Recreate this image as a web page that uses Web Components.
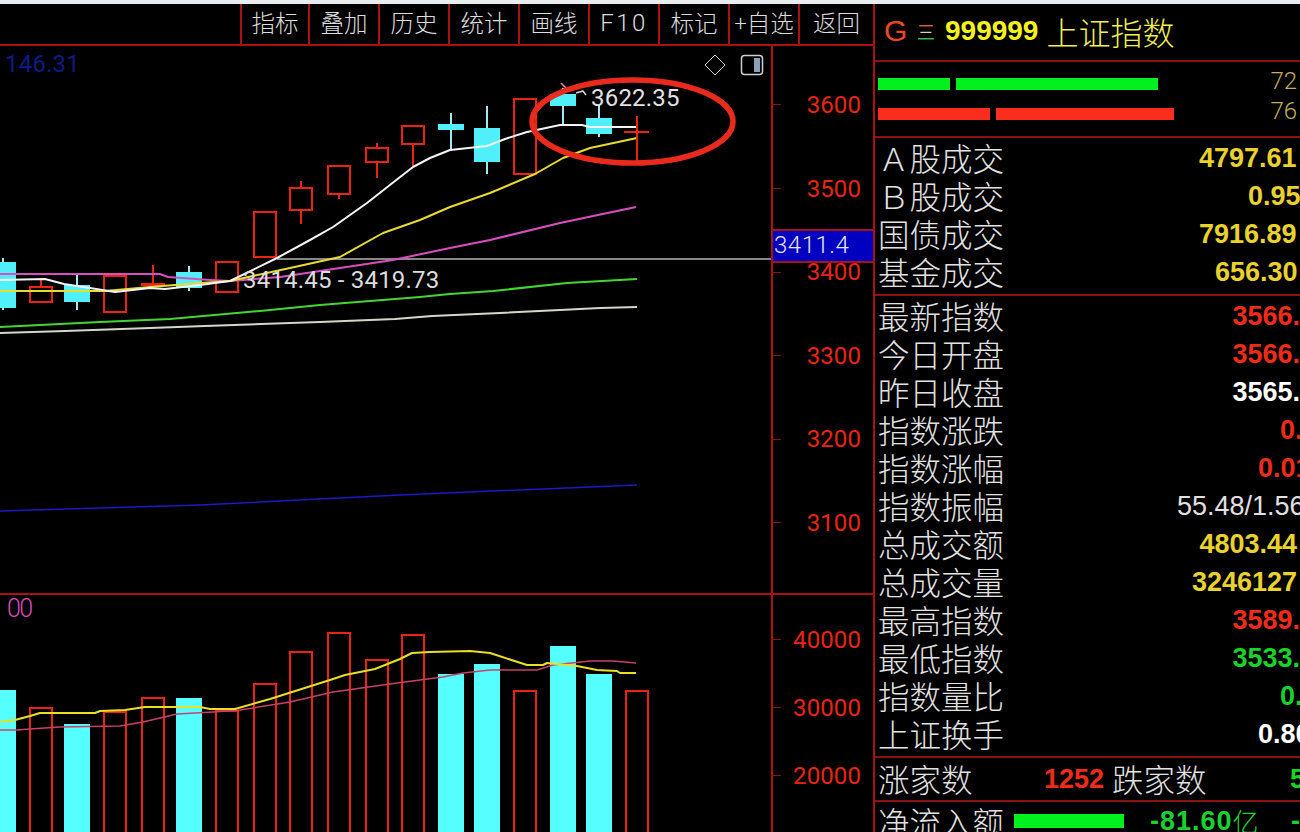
<!DOCTYPE html>
<html lang="zh-CN">
<head>
<meta charset="utf-8">
<title>上证指数</title>
<style>
html,body{margin:0;padding:0;background:#000}
</style>
</head>
<body>
<tdx-app>
  <tool-bar slot="bar">
    <tool-btn narrow>指标</tool-btn><tool-btn>叠加</tool-btn><tool-btn>历史</tool-btn><tool-btn>统计</tool-btn><tool-btn>画线</tool-btn><tool-btn latin>F10</tool-btn><tool-btn>标记</tool-btn><tool-btn>+自选</tool-btn><tool-btn wide>返回</tool-btn>
  </tool-bar>
  <chart-pane slot="price" rule style="--pane-h:549px">
    <kline-plot></kline-plot>
    <price-axis slot="axis" ticks="3600,3500,3400,3300,3200,3100" step="83.6" top="17.2">
      <span class="cur">3411.4</span>
    </price-axis>
  </chart-pane>
  <chart-pane slot="volume" style="--pane-h:237px">
    <volume-plot></volume-plot>
    <price-axis slot="axis" ticks="40000,30000,20000" step="68" top="10.5"></price-axis>
  </chart-pane>
  <quote-panel slot="panel">
    <quote-head slot="head"></quote-head>
    <quote-levels slot="levels"></quote-levels>
    <quote-group>
      <quote-row tone="yellow" over="3.5"><span slot="value">4797.61</span>Ａ股成交</quote-row>
      <quote-row tone="yellow" over="-0.5"><span slot="value">0.95</span>Ｂ股成交</quote-row>
      <quote-row tone="yellow" over="3.5"><span slot="value">7916.89</span>国债成交</quote-row>
      <quote-row tone="yellow" over="2.5"><span slot="value">656.30</span>基金成交</quote-row>
    </quote-group>
    <quote-group>
      <quote-row tone="red"><span slot="value">3566.</span>最新指数</quote-row>
      <quote-row tone="red"><span slot="value">3566.</span>今日开盘</quote-row>
      <quote-row tone="white"><span slot="value">3565.</span>昨日收盘</quote-row>
      <quote-row tone="red" over="-2.5"><span slot="value">0.</span>指数涨跌</quote-row>
      <quote-row tone="red" over="-10.5"><span slot="value">0.01</span>指数涨幅</quote-row>
      <quote-row tone="plain" over="-4.5"><span slot="value">55.48/1.56</span>指数振幅</quote-row>
      <quote-row tone="yellow" over="3"><span slot="value">4803.44</span>总成交额</quote-row>
      <quote-row tone="yellow" over="3"><span slot="value">3246127</span>总成交量</quote-row>
      <quote-row tone="red"><span slot="value">3589.</span>最高指数</quote-row>
      <quote-row tone="green"><span slot="value">3533.</span>最低指数</quote-row>
      <quote-row tone="green" over="-2.5"><span slot="value">0.</span>指数量比</quote-row>
      <quote-row tone="white" over="-10.5"><span slot="value">0.80</span>上证换手</quote-row>
    </quote-group>
    <quote-breadth></quote-breadth>
    <quote-flow></quote-flow>
  </quote-panel>
</tdx-app>

<script>
const CJK = '"Noto Sans CJK SC","Noto Sans",sans-serif';
const NUM = '"Liberation Sans",Arial,sans-serif';
const THIN = 'Roboto,"Liberation Sans",sans-serif';
const RED = '#ea2412';
const LINE = '#a81210';
const CYAN = '#55ffff';

function define(name, html, init) {
  customElements.define(name, class extends HTMLElement {
    constructor() {
      super();
      this.attachShadow({ mode: 'open' }).innerHTML = typeof html === 'function' ? '' : html;
    }
    connectedCallback() {
      if (typeof html === 'function') this.shadowRoot.innerHTML = html(this);
      if (init) init(this, this.shadowRoot);
    }
  });
}

define('tdx-app', `<style>
:host{display:flex;width:1300px;height:832px;box-sizing:border-box;overflow:hidden;background:#000;border-top:4px solid #e9ecef;color:#ddd;font-family:${CJK}}
.left{flex:none;width:875px;box-sizing:border-box;border-right:2px solid ${LINE};display:flex;flex-direction:column;min-height:0}
::slotted([slot=panel]){flex:none;width:425px}
</style>
<div class="left"><slot name="bar"></slot><slot name="price"></slot><slot name="volume"></slot></div>
<slot name="panel"></slot>`);

define('tool-bar', `<style>
:host{display:flex;justify-content:flex-end;flex:none;height:42px;box-sizing:border-box;border-bottom:2px solid ${LINE}}
</style><slot></slot>`);

define('tool-btn', `<style>
:host{display:flex;align-items:center;justify-content:center;flex:none;width:70px;box-sizing:border-box;border-left:2px solid ${LINE};font:300 23.5px/1 ${CJK};color:#dcdcdc;white-space:nowrap;padding-bottom:2px}
:host([wide]){width:75px}
:host([narrow]){width:68px}
:host([latin]){font:300 24px/1 ${THIN};letter-spacing:2.5px}
</style><slot></slot>`);

define('chart-pane', `<style>
:host{display:flex;flex:none;height:var(--pane-h);box-sizing:border-box}
:host([rule]){border-bottom:2px solid ${LINE}}
.plot{flex:none;width:771px;height:100%;position:relative;overflow:hidden}
</style><div class="plot"><slot></slot></div><slot name="axis"></slot>`);

define('price-axis', host => {
  const ticks = host.getAttribute('ticks').split(',');
  const step = host.getAttribute('step');
  const top = host.getAttribute('top');
  return `<style>
:host{display:block;position:relative;flex:none;width:102px;height:100%;box-sizing:border-box;border-left:2px solid ${LINE};padding-top:${top}px;font:300 24px/1 ${THIN};color:${RED}}
.t{display:flex;align-items:center;height:${step}px;padding-right:12px}
.t i{width:8px;height:1px;background:#8a1a10}
.t b{font-weight:400;margin-left:auto;letter-spacing:.1px}
::slotted(.cur){position:absolute;left:0;right:0;top:184px;height:30px;line-height:28px;background:#0000c0;color:#e6e6ff;border-top:2px solid ${LINE};border-bottom:2px solid ${LINE};letter-spacing:.5px;padding-left:1px;box-sizing:content-box;margin-top:-1px}
</style>${ticks.map(t => `<div class="t"><i></i><b>${t}</b></div>`).join('')}<slot></slot>`;
});

function pts(a){return a.map(p=>p.join(',')).join(' ')}
function poly(a,c,w=2){return `<polyline points="${pts(a)}" fill="none" stroke="${c}" stroke-width="${w}" stroke-linejoin="round"/>`}
function hollow(x1,y1,x2,y2){return `<rect x="${x1+1}" y="${y1+1}" width="${x2-x1-2}" height="${y2-y1-2}" fill="#000" stroke="${RED}" stroke-width="2"/>`}
function wick(x,y1,y2,c){return `<line x1="${x}" y1="${y1}" x2="${x}" y2="${y2}" stroke="${c}" stroke-width="2"/>`}

const CANDLES = [
 ['c',0,16,262,308,258,310,3],
 ['r',29,53,286,303,279,303,41],
 ['c',64,90,285,302,275,310,77],
 ['r',103,127,275,313,275,313,115],
 ['r',141,165,283,286,265,286,153],
 ['c',176,202,272,288,266,291,189],
 ['r',215,239,261,293,261,293,227],
 ['r',253,277,211,258,211,258,265],
 ['r',289,313,187,211,181,224,301],
 ['r',327,351,165,195,165,199,339],
 ['r',365,389,147,163,143,178,377],
 ['r',401,425,125,145,125,166,413],
 ['c',438,464,124,130,113,151,451],
 ['c',474,500,128,162,106,174,487],
 ['r',513,537,98,175,98,175,525],
 ['c',550,576,94,106,88,125,563],
 ['c',586,612,118,134,105,137,599]
];

define('kline-plot', () => {
  const sticks = CANDLES.map(([t,x1,x2,y1,y2,w1,w2,cx]) =>
    t==='c'
      ? wick(cx,w1,w2,'#9fe9f5') + `<rect x="${x1}" y="${y1}" width="${x2-x1}" height="${y2-y1}" fill="#4ff0fa"/>`
      : wick(cx,w1,w2,RED) + hollow(x1,y1,x2,y2)
  ).join('');
  const white=[[0,280],[45,279],[64,284],[90,288],[115,292],[150,288],[165,289],[200,285],[230,281],[277,258],[310,240],[333,227],[350,215],[367,203],[395,181],[413,167],[430,158],[450,150],[487,146],[505,139],[527,132],[560,125],[582,125],[590,127],[637,127]];
  const yellow=[[0,291],[105,291],[150,287],[200,283],[230,281],[290,268],[340,257],[383,233],[420,220],[450,207],[490,193],[535,174],[563,158],[590,148],[637,138]];
  const magenta=[[0,274],[160,274],[168,277],[210,280],[230,281],[280,277],[340,268],[393,260],[450,248],[490,240],[560,223],[636,207]];
  const green=[[0,327],[60,324],[100,322],[170,319],[260,311],[320,305],[420,297],[450,294],[493,291],[567,283],[637,279]];
  const pale=[[0,333],[65,331],[150,328],[205,326],[290,323],[320,322],[395,319],[432,316],[500,313],[560,310],[600,308],[637,307]];
  return `<style>
:host{display:block;width:771px;height:547px}
svg{display:block;font-family:${THIN};font-weight:300;font-size:24px}
</style>
<svg width="771" height="547" viewBox="0 46 771 547" xmlns="http://www.w3.org/2000/svg">
<text x="5" y="72" fill="#0c1c86" letter-spacing=".2" font-weight="400">146.31</text>
<line x1="277" y1="259" x2="771" y2="259" stroke="#b4b4b4" stroke-width="1.5"/>
${sticks}
${poly([[561,83],[566,88]],'#e090a0',1.5)}
${poly([[576,93],[583,91],[586,95]],'#d8d8d8',1.5)}
${poly(pale,'#d2d8c8')}
${poly(green,'#44d630')}
<polyline points="0,511 200,505 400,495 637,485" fill="none" stroke="#1a1ac8" stroke-width="1.5"/>
${poly(magenta,'#d84fc0')}
${poly(yellow,'#e8dc2c')}
${poly(white,'#f4f4f4')}
<line x1="637" y1="116" x2="637" y2="163" stroke="${RED}" stroke-width="2"/>
<line x1="624" y1="132" x2="649" y2="132" stroke="${RED}" stroke-width="2"/>
<text x="243" y="288" fill="#dcdcdc" letter-spacing=".2" font-weight="400">3414.45 - 3419.73</text>
<text x="591" y="106" fill="#e2e2e2" letter-spacing=".2" font-weight="400">3622.35</text>
<ellipse cx="632.5" cy="121.5" rx="100.5" ry="41.5" fill="none" stroke="#ea2a1c" stroke-width="5.5"/>
<path d="M715 55 L725 65 L715 75 L705 65 Z" fill="none" stroke="#cfcfcf" stroke-width="1"/>
<rect x="741.5" y="55.5" width="21" height="19" rx="3" fill="none" stroke="#cfcfcf" stroke-width="1.5"/>
<rect x="754" y="58" width="6" height="14" fill="#8ba2b4"/>
</svg>`;
});

const VOLS = [['c',0,16,690],['r',29,53,707],['c',64,90,724],['r',103,127,711],['r',141,165,697],['c',176,202,698],['r',215,239,710],['r',253,277,683],['r',289,313,651],['r',327,351,632],['r',365,389,659],['r',401,425,634],['c',438,464,674],['c',474,500,664],['r',513,537,690],['c',550,576,646],['c',586,612,674],['r',625,649,690]];

define('volume-plot', () => {
  const bars = VOLS.map(([t,x1,x2,y]) => t==='c'
    ? `<rect x="${x1}" y="${y}" width="${x2-x1}" height="${840-y}" fill="${CYAN}"/>`
    : `<rect x="${x1+1}" y="${y+1}" width="${x2-x1-2}" height="${850-y}" fill="#000" stroke="${RED}" stroke-width="2"/>`).join('');
  const y=[[0,722],[15,720],[30,716],[40,713],[95,713],[100,711],[125,710],[145,707],[200,707],[210,709],[235,709],[270,699],[330,680],[345,675],[375,669],[400,659],[412,653],[430,652],[470,651],[490,653],[527,665],[543,665],[547,663],[577,666],[597,670],[617,671],[620,673],[636,673]];
  const p=[[0,730],[17,730],[30,729],[60,727],[120,726],[143,722],[177,714],[213,712],[240,710],[290,702],[333,692],[397,683],[443,677],[463,673],[490,670],[537,670],[553,665],[590,661],[613,661],[636,663]];
  return `<style>
:host{display:block;width:771px;height:237px}
svg{display:block;font-family:${THIN};font-weight:300}
</style>
<svg width="771" height="237" viewBox="0 595 771 237" xmlns="http://www.w3.org/2000/svg">
<text x="7" y="617" fill="#d84cbc" letter-spacing="-1.5" font-size="25">00</text>
${bars}
${poly(p,'#c8406c',1.5)}
${poly(y,'#eadf24',2)}
</svg>`;
});

define('quote-panel', `<style>
:host{display:block;height:828px;overflow:hidden;background:#000}
</style><slot name="head"></slot><slot name="levels"></slot><slot></slot>`);

define('quote-head', `<style>
:host{display:flex;align-items:center;height:58px;box-sizing:border-box;border-bottom:2px solid #8c1212;padding:0 0 2px 9px;white-space:nowrap}
.g{font:400 30px/1 ${NUM};color:#ee4a1e;width:33px}
.s{font:400 18px/1 ${CJK};width:28px;background:linear-gradient(#e0602c 0 36%,#d8d8a0 36% 64%,#38c048 64%);-webkit-background-clip:text;background-clip:text;-webkit-text-fill-color:transparent}
.c{font:700 28px/1 ${NUM};color:#f6f21a;margin-right:8px}
.n{font:300 32px/1 ${CJK};color:#f0ee50}
</style><span class="g">G</span><span class="s">三</span><span class="c">999999</span><span class="n">上证指数</span>`);

define('level-bar', host => `<style>
:host{display:flex;align-items:center;height:30px;gap:6px;padding-left:3px}
i{display:block;height:12px;background:${host.getAttribute('color')}}
span{margin-left:auto;margin-right:3px;margin-bottom:6px;font:300 24px/1 ${THIN};color:#c4b05a}
</style>${host.getAttribute('segs').split(',').map(w=>`<i style="width:${w}px"></i>`).join('')}<span><slot></slot></span>`);

define('quote-levels', `<style>
:host{display:block;height:76px;box-sizing:border-box;border-bottom:2px solid #8c1212;padding-top:7px}
</style><level-bar color="#00f01e" segs="72,202">72</level-bar><level-bar color="#fb2d1c" segs="112,178">76</level-bar>`);

define('quote-group', `<style>
:host{display:block;box-sizing:border-box;border-bottom:2px solid #8c1212;padding:0 0 4px}
</style><slot></slot>`);

const TONES = {yellow:'#ead22c',red:'#ee2c18',white:'#ffffff',green:'#19d32a',plain:'#e0e0e0'};
define('quote-row', host => {
  const tone = host.getAttribute('tone') || 'white';
  const over = host.getAttribute('over') || '0';
  return `<style>
:host{display:flex;align-items:center;height:38px;padding-left:3px;white-space:nowrap;font:300 31.5px/38px ${CJK};color:#e2e2e2}
.v{margin-left:auto;margin-right:${over}px;margin-top:2px;font:${tone==='plain'?400:700} 27px/38px ${NUM};color:${TONES[tone]}}
</style><span class="l"><slot></slot></span><span class="v"><slot name="value"></slot></span>`;
});

define('quote-breadth', `<style>
:host{display:grid;grid-template-columns:226px auto 1fr;align-items:center;height:44px;box-sizing:border-box;border-bottom:2px solid #8c1212;padding-left:3px;white-space:nowrap;font:300 31.5px/1 ${CJK};color:#e2e2e2}
.up{display:flex;justify-content:space-between;align-items:center}
b{font:700 27px/1 ${NUM}}
.r{color:#ee2c18}.g{color:#19d32a;justify-self:end;margin-right:-5px}
.d{margin-left:8px}
</style><div class="up"><span>涨家数</span><b class="r">1252</b></div><span class="d">跌家数</span><b class="g">5</b>`);

define('quote-flow', `<style>
:host{display:flex;align-items:center;height:38px;padding-left:3px;white-space:nowrap;font:300 31.5px/38px ${CJK};color:#e2e2e2}
i{display:block;width:110px;height:14px;background:#00f01e;margin:0 26px 0 10px}
b{font:700 27px/1 ${NUM};color:#19d32a;letter-spacing:1px}
.y{font:300 26px/1 ${CJK};color:#19d32a}
.m{margin-left:auto;margin-right:-1px}
</style><span>净流入额</span><i></i><b>-81.60</b><span class="y">亿</span><b class="m">-</b>`);
</script>
</body>
</html>
